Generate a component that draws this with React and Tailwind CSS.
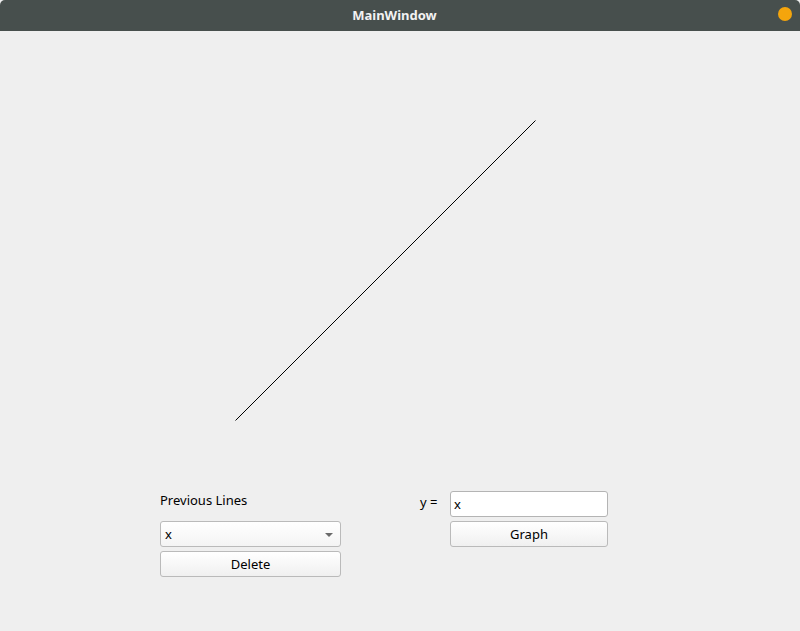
import React from 'react';

export default function App() {
  return (
    <div className="w-[800px] h-[631px] bg-[#efefef] flex flex-col overflow-hidden" style={{ fontFamily: '"Noto Sans", "Open Sans", sans-serif' }}>
      {/* Title bar */}
      <div className="h-[31px] bg-[#474f4d] rounded-t-[5px] flex items-center relative shrink-0 pr-[11px]">
        <span className="flex-1 text-center text-[13px] font-bold text-[#f2f2f2]">MainWindow</span>
        <div className="absolute right-[8px] top-[7px] w-[14px] h-[14px] rounded-full bg-[#f5a50c]" />
      </div>

      {/* Plot */}
      <svg width="800" height="457" className="block shrink-0">
        <line x1="235.5" y1="389.5" x2="535.5" y2="89.5" stroke="#000" strokeWidth="1" />
      </svg>

      {/* Controls */}
      <div className="flex pl-[160px] text-[13px] text-black">
        <div className="w-[181px] flex flex-col">
          <div className="h-[26px] flex items-center">Previous Lines</div>
          <div className="mt-[7px] h-[26px] rounded-[3px] border border-[#bababa] bg-gradient-to-b from-white to-[#f4f4f4] flex items-center pl-[4px] pr-[7px] pt-px">
            <span className="flex-1">x</span>
            <svg width="8" height="4" viewBox="0 0 8 4">
              <path d="M0 0 L8 0 L4 4 Z" fill="#6a6a6a" />
            </svg>
          </div>
          <div className="mt-[4px] h-[26px] rounded-[3px] border border-[#bababa] bg-gradient-to-b from-white to-[#f0f0f0] flex items-center justify-center pt-px">
            Delete
          </div>
        </div>

        <div className="ml-[79px] flex flex-col pt-[3px]">
          <div className="flex items-center">
            <span className="w-[30px] pb-[2px]">y =</span>
            <div className="w-[158px] h-[26px] rounded-[3px] border border-[#b4b4b4] bg-white flex items-center px-[3px] pt-px">x</div>
          </div>
          <div className="ml-[30px] mt-[4px] w-[158px] h-[26px] rounded-[3px] border border-[#bababa] bg-gradient-to-b from-white to-[#f0f0f0] flex items-center justify-center pt-px">
            Graph
          </div>
        </div>
      </div>
    </div>
  );
}
